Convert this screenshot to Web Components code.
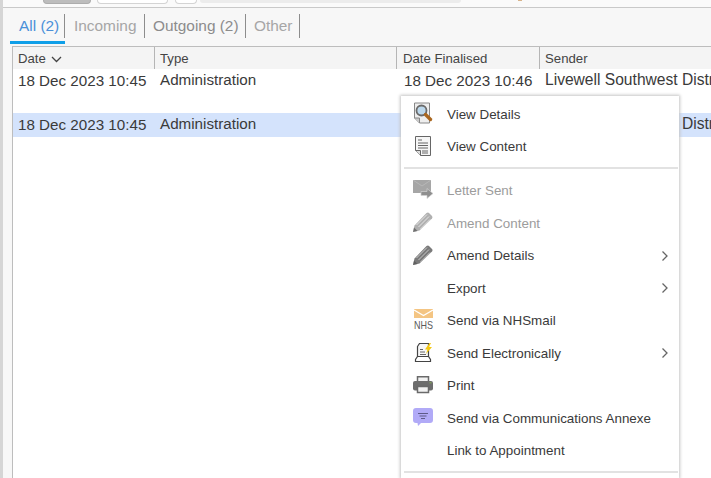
<!DOCTYPE html>
<html>
<head>
<meta charset="utf-8">
<style>
  html, body { margin: 0; padding: 0; width: 711px; height: 478px; overflow: hidden; background: #fff; font-family: "Liberation Sans", Arial, sans-serif; }
</style>
</head>
<body>
<letter-app></letter-app>

<script>
const pencil = (c, s) => `<svg width="20" height="20" viewBox="0 0 20 20"><path d="M0 20l1.500-6.500 12-12.500q1.500-1 2.500 0l3 3q1 1 0 2.500l-12.500 12z" fill="${c}"/><path d="M3.500 13l10.500-10.500M5.500 15l10.500-10.500M7.500 17l9.500-9.500" stroke="${s}" stroke-width="1" fill="none"/><path d="M0 20l1-4.500 3.500 3.500z" fill="#555" opacity=".7"/></svg>`;

const ICONS = {
  details: `<svg width="20" height="22" viewBox="0 0 20 22"><path d="M1.500 1h15v20h-10l-5-5z" fill="#eee" stroke="#888"/><path d="M1.500 16h5v5" fill="#ccc" stroke="#888"/><circle cx="8.500" cy="8.500" r="5" fill="#bcd8ec" stroke="#6a6a6a" stroke-width="1.800"/><path d="M12.500 12.500l5 5" stroke="#a9661f" stroke-width="3.400" stroke-linecap="round"/></svg>`,
  content: `<svg width="20" height="22" viewBox="0 0 20 22"><path d="M2.500 1.500h15v19h-10l-5-5z" fill="#f6f6f6" stroke="#666"/><path d="M2.500 15.500h5v5" fill="#ddd" stroke="#666"/><path d="M5 5h4M5 8h10M5 10.500h10M5 13h10M9 16h6M9 18h6" stroke="#666"/></svg>`,
  letter: `<svg width="20" height="19" viewBox="0 0 20 19"><path d="M0 0h18v13h-18z" fill="#a6a6a6"/><path d="M0 0l9 6 9-6" fill="none" stroke="#b8b8b8"/><path d="M8 11.500h6v-3l6 5-6 5v-3h-6z" fill="#8f8f8f" stroke="#d2d2d2" stroke-width=".7"/></svg>`,
  pencilMuted: pencil('#b0b0b0', '#e4e4e4'),
  pencil: pencil('#7a7a7a', '#c8c8c8'),
  nhs: `<svg width="22" height="24" viewBox="0 0 22 24" style="margin-right:-2px"><path d="M1 1h19v9h-19z" fill="#f4c583"/><path d="M1 2l9.500 5.500 9.500-5.500" fill="none" stroke="#fff" stroke-width="1.300"/><text x="1" y="21" textLength="19" lengthAdjust="spacingAndGlyphs" font-family="Liberation Sans, sans-serif" font-size="11" fill="#5a5a5a">NHS</text></svg>`,
  electronic: `<svg width="20" height="19" viewBox="0 0 20 19"><path d="M4.500 3.500l2-3h9v13h-11z" fill="#f7f7f7" stroke="#444" stroke-width="1.200"/><path d="M2.500 18.500v-2l2-3h11l2 3v2z" fill="#fff" stroke="#444" stroke-width="1.200"/><path d="M7 6.500h3M7 9h5M7 11.500h6" stroke="#666"/><path d="M16.500 0l-4.500 6.500h2.500l-1.500 4.500 6-7h-3l2-4z" fill="#f4c70f"/></svg>`,
  print: `<svg width="20" height="18" viewBox="0 0 20 18"><path d="M4.500 .800h11v5h-11z" fill="#f2f2f2" stroke="#6a6a6a" stroke-width="1.500"/><rect x="0" y="5" width="20" height="9.500" rx="2" fill="#6d6d6d"/><path d="M4.500 10.500h11v6h-11z" fill="#f2f2f2" stroke="#6a6a6a" stroke-width="1.500"/><path d="M16.500 6h2v1.500h-2z" fill="#7d9a5c"/></svg>`,
  annexe: `<svg width="20" height="18" viewBox="0 0 20 18"><path d="M3 0h14a3 3 0 0 1 3 3v9a3 3 0 0 1-3 3h-9l-3 3-.5-3h-1.500a3 3 0 0 1-3-3v-9a3 3 0 0 1 3-3z" fill="#b1aaf7"/><path d="M5 5.500h10M6.500 8h7M8 10.500h4" stroke="#5e5a88" stroke-width="1.100"/></svg>`,
  chevron: `<svg width="10" height="12" viewBox="0 0 10 12"><path d="M2.500 1.500l4.500 4.500-4.500 4.500" fill="none" stroke="#666" stroke-width="1.300"/></svg>`
};

class TopStrip extends HTMLElement {
  constructor() {
    super();
    this.attachShadow({ mode: 'open' });
    this.shadowRoot.innerHTML = `
      <style>
        :host { display: flex; height: 7px; align-items: flex-start; background: #fafafa; border-bottom: 1px solid #c9c9c9; padding-left: 40px; }
        div { height: 4px; box-sizing: border-box; border-radius: 0 0 5px 5px; }
        .a { width: 48px; background: #bdbdbd; border: 1px solid #adadad; border-top: 0; }
        .b { width: 71px; margin-left: 6px; background: #fff; border: 1px solid #d4d4d4; border-top: 0; }
        .c { width: 22px; margin-left: 7px; background: #fff; border: 1px solid #d4d4d4; border-top: 0; }
        .d { width: 261px; margin-left: 3px; height: 3px; background: #ececec; }
        .e { width: 4px; height: 1px; margin-left: 57px; background: #d8b48c; border-radius: 0; }
      </style>
      <div class="a"></div><div class="b"></div><div class="c"></div><div class="d"></div><div class="e"></div>`;
  }
}

class TabBar extends HTMLElement {
  constructor() {
    super();
    this.attachShadow({ mode: 'open' });
    this.shadowRoot.innerHTML = `
      <style>
        :host { display: flex; height: 36px; padding-left: 7px; background: #f7f7f7; align-items: flex-start; font-size: 15.400px; color: #a6a6a6; }
        span { display: flex; align-items: center; height: 36px; padding: 0 0 1px 9px; box-sizing: border-box; position: relative; white-space: nowrap; }
        span::after { content: ""; position: absolute; right: 0; top: 6px; height: 24px; width: 1px; background: #8d8d8d; }
        .on { color: #4a90d9; width: 55px; box-shadow: inset 0 -3px #0f9fe8; }
        .inc { width: 80px; }
        .out { color: #8c8c8c; width: 101px; padding-left: 8px; }
        .oth { width: 54px; padding-left: 8px; }
      </style>
      <span class="on">All (2)</span><span class="inc">Incoming</span><span class="out">Outgoing (2)</span><span class="oth">Other</span>`;
  }
}

class LetterTable extends HTMLElement {
  constructor() {
    super();
    this.attachShadow({ mode: 'open' });
    this.shadowRoot.innerHTML = `
      <style>
        :host { display: block; margin: 2px 0 0 9px; border-left: 1px solid #bdbdbd; border-top: 1px solid #bdbdbd; background: #fff; height: 431px; color: #3a3a3a; }
        .row { display: grid; grid-template-columns: 142px 242px 143px 1fr; }
        .head { height: 22px; background: #f4f4f4; font-size: 13.200px; color: #444; }
        .head div { padding: 4px 0 0 5px; border-right: 1px solid #b5b5b5; white-space: nowrap; }
        .head div:last-child { border-right: 0; }
        .head div.f { padding-left: 6px; }
        .head svg { margin-left: 5px; }
        .r1 { height: 44px; font-size: 15.200px; }
        .r2 { height: 24px; font-size: 15.200px; background: #d4e3fc; }
        .cell { padding: 3px 0 0 5px; white-space: nowrap; overflow: hidden; }
        .t { padding-top: 2px; }
        .d3 { padding-left: 7px; }
        .s { font-size: 15.600px; }
      </style>
      <div class="row head">
        <div>Date<svg width="11" height="7" viewBox="0 0 11 7"><path d="M1 1l4.500 4.500 4.500-4.500" fill="none" stroke="#444" stroke-width="1.300"/></svg></div>
        <div>Type</div><div class="f">Date Finalised</div><div>Sender</div>
      </div>
      <div class="row r1">
        <div class="cell">18 Dec 2023 10:45</div><div class="cell t">Administration</div>
        <div class="cell d3">18 Dec 2023 10:46</div><div class="cell t s">Livewell Southwest District</div>
      </div>
      <div class="row r2">
        <div class="cell">18 Dec 2023 10:45</div><div class="cell t">Administration</div>
        <div class="cell"></div><div class="cell t s">Livewell Southwest District</div>
      </div>`;
  }
}

class MenuItem extends HTMLElement {
  constructor() {
    super();
    this.attachShadow({ mode: 'open' });
  }
  connectedCallback() {
    const icon = this.getAttribute('icon');
    const muted = this.hasAttribute('muted');
    this.shadowRoot.innerHTML = `
      <style>
        :host { display: flex; height: 32.500px; align-items: center; font-size: 13.400px; color: ${muted ? '#9c9c9c' : '#3a3a3a'}; }
        .ic { width: 46px; padding-left: 12px; box-sizing: border-box; display: flex; align-items: center; }
        .ic svg { display: block; margin-top: -2px; }
        .tx { flex: 1; white-space: nowrap; }
        .ar { width: 19px; display: flex; }
      </style>
      <div class="ic">${icon ? ICONS[icon] : ''}</div>
      <div class="tx"><slot></slot></div>
      <div class="ar">${this.hasAttribute('more') ? ICONS.chevron : ''}</div>`;
  }
}

class PopupMenu extends HTMLElement {
  constructor() {
    super();
    this.attachShadow({ mode: 'open' });
    this.shadowRoot.innerHTML = `
      <style>
        :host { position: absolute; left: 398px; top: 96px; width: 278px; height: 382px; box-sizing: border-box; background: #fff; box-shadow: 0 0 3px 1px #c4c4c4; padding-top: 2px; }
        ::slotted(hr) { border: 0; height: 2px; background: #e2e2e2; margin: 3.500px 0 6px 3px; width: 274px; }
      </style>
      <slot></slot>`;
  }
}

class LetterApp extends HTMLElement {
  constructor() {
    super();
    this.attachShadow({ mode: 'open' });
    this.shadowRoot.innerHTML = `
      <style>
        :host { display: block; width: 711px; height: 478px; position: relative; overflow: hidden; background: #f7f7f7; border-left: 3px solid #d5d5d5; box-sizing: border-box; }
      </style>
      <top-strip></top-strip>
      <tab-bar></tab-bar>
      <letter-table></letter-table>
      <slot></slot>`;
  }
}

customElements.define('top-strip', TopStrip);
customElements.define('tab-bar', TabBar);
customElements.define('letter-table', LetterTable);
customElements.define('menu-item', MenuItem);
customElements.define('popup-menu', PopupMenu);
customElements.define('letter-app', LetterApp);

document.querySelector('letter-app').innerHTML = `
  <popup-menu>
    <menu-item icon="details">View Details</menu-item>
    <menu-item icon="content">View Content</menu-item>
    <hr>
    <menu-item icon="letter" muted>Letter Sent</menu-item>
    <menu-item icon="pencilMuted" muted>Amend Content</menu-item>
    <menu-item icon="pencil" more>Amend Details</menu-item>
    <menu-item more>Export</menu-item>
    <menu-item icon="nhs">Send via NHSmail</menu-item>
    <menu-item icon="electronic" more>Send Electronically</menu-item>
    <menu-item icon="print">Print</menu-item>
    <menu-item icon="annexe">Send via Communications Annexe</menu-item>
    <menu-item>Link to Appointment</menu-item>
    <hr>
  </popup-menu>`;
</script>
</body>
</html>
